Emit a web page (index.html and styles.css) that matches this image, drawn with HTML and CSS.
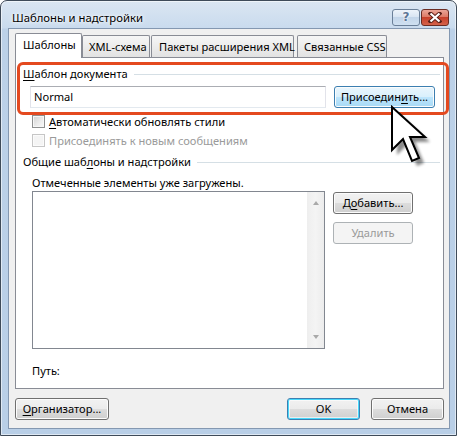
FILE: index.html
```html
<!DOCTYPE html>
<html lang="ru">
<head>
<meta charset="utf-8">
<title>Шаблоны и надстройки</title>
<link rel="stylesheet" href="styles.css">
</head>
<body>
<div class="window">
  <div class="titlebar">
    <span class="title">Шаблоны и надстройки</span>
    <div class="caption-btns">
      <span class="cbtn help">?</span>
      <span class="cbtn close"><svg width="14" height="11" viewBox="0 0 14 11"><path d="M2.5 1.5 L11.5 9.5 M11.5 1.5 L2.5 9.5" stroke="#5a2018" stroke-width="4" stroke-linecap="square"/><path d="M2.5 1.5 L11.5 9.5 M11.5 1.5 L2.5 9.5" stroke="#ffffff" stroke-width="2.2"/></svg></span>
    </div>
  </div>
  <div class="client">
    <div class="tabs">
      <div class="tab tab-1 active">Шаблоны</div>
      <div class="tab tab-2">XML-схема</div>
      <div class="tab tab-3">Пакеты расширения XML</div>
      <div class="tab tab-4">Связанные CSS</div>
    </div>
    <div class="panel">
      <div class="group-head"><span><u>Ш</u>аблон документа</span><i class="gline"></i></div>
      <div class="row-input">
        <div class="textbox">Normal</div>
        <div class="btn hover attach">Присоедин<u>и</u>ть...</div>
      </div>
      <div class="check"><span class="box"></span><span><u>А</u>втоматически обновлять стили</span></div>
      <div class="check check-2 disabled"><span class="box"></span><span>Присоединять к новым сообщениям</span></div>
      <div class="group-head group-2"><span>Общие шаб<u>л</u>оны и надстройки</span><i class="gline"></i></div>
      <div class="note">Отмеченные элементы уже загружены.</div>
      <div class="list-row">
        <div class="listbox">
          <div class="list-area"></div>
          <div class="scrollbar"><span class="arrow up"></span><span class="arrow down"></span></div>
        </div>
        <div class="side-btns">
          <div class="btn side">Д<u>о</u>бавить...</div>
          <div class="btn side disabled">Удалить</div>
        </div>
      </div>
      <div class="path">Путь:</div>
    </div>
    <div class="footer">
      <div class="btn org"><u>О</u>рганизатор...</div>
      <div class="spacer"></div>
      <div class="btn default foot">OK</div>
      <div class="btn foot">Отмена</div>
    </div>
  </div>
  <div class="highlight"></div>
  <svg class="cursor" width="44" height="64" viewBox="0 0 44 64">
    <defs><filter id="sh" x="-20%" y="-20%" width="140%" height="140%"><feGaussianBlur stdDeviation="1.6"/></filter></defs>
    <polygon points="8,7 8,50 19,39 28,61 35,58 26,37 41,37" fill="#000" opacity="0.45" filter="url(#sh)"/>
    <polygon points="3,2 3,45 14,34 23,56 30,53 21,32 36,32" fill="#ffffff" stroke="#000" stroke-width="2" stroke-linejoin="miter"/>
  </svg>
</div>
</body>
</html>
```
FILE: styles.css
```css
html, body {
  margin: 0;
  padding: 0;
  background: #ffffff;
}
body {
  font-family: "Noto Sans", "Open Sans", sans-serif;
  font-size: 11.1px;
  color: #000;
}
u { text-decoration: underline; text-underline-offset: 2px; }

.window {
  position: relative;
  box-sizing: border-box;
  width: 457px;
  height: 436px;
  border: 1px solid #3f4b59;
  border-radius: 7px 7px 0 0;
  background: linear-gradient(180deg, #dbe6f2 0px, #c9dbee 27px, #bcd1e8 28px, #b9cfe7 100%);
  box-shadow: inset 0 0 0 1px rgba(255,255,255,0.55);
  display: flex;
  flex-direction: column;
  overflow: hidden;
}

.titlebar {
  height: 27px;
  display: flex;
  align-items: flex-start;
  justify-content: space-between;
  padding-left: 11px;
}
.title {
  padding-top: 9px;
  line-height: 16px;
  font-size: 11.3px;
  color: #000;
  text-shadow: 0 0 6px #fff, 0 0 3px #fff;
}
.caption-btns {
  display: flex;
  gap: 1px;
  margin-top: 8px;
  margin-right: 7px;
}
.cbtn {
  box-sizing: border-box;
  width: 28px;
  height: 17px;
  border: 1px solid #6a7f98;
  border-radius: 3px;
  display: flex;
  align-items: center;
  justify-content: center;
}
.help {
  background: linear-gradient(180deg, #edf3fa 0%, #d9e5f2 45%, #c3d5e9 50%, #cfe0f1 100%);
  color: #5c7696;
  font-family: "DejaVu Sans", sans-serif;
  font-weight: bold;
  font-size: 12px;
  line-height: 15px;
  text-shadow: 0 0 2px #fff, 0 0 2px #fff;
}
.close {
  border-color: #6b2c22;
  background: linear-gradient(180deg, #eaa597 0%, #dd7a66 45%, #c7402a 50%, #d4624a 100%);
}

.client {
  flex: 1;
  margin: 0 6px 6px 7px;
  box-sizing: border-box;
  border: 1px solid #8498b1;
  background: #f0f0f0;
  padding: 4px 5px 8px 6px;
  display: flex;
  flex-direction: column;
}

.tabs {
  display: flex;
  align-items: flex-end;
  height: 24px;
  position: relative;
  z-index: 1;
}
.tab {
  box-sizing: border-box;
  height: 22px;
  border: 1px solid #898c95;
  border-bottom: none;
  border-radius: 2px 2px 0 0;
  background: linear-gradient(180deg, #f6f6f6 0%, #ececec 50%, #e2e2e2 100%);
  line-height: 21px;
  padding-left: 6px;
  white-space: nowrap;
}
.tab.active {
  height: 25px;
  margin-bottom: -1px;
  background: #ffffff;
  line-height: 22px;
  padding-left: 7px;
}
.tab-1 { width: 67px; }
.tab-2 { width: 68px; }
.tab-3 { width: 143px; margin-left: 1px; padding-left: 7px; }
.tab-4 { width: 90px; margin-left: 3px; }

.panel {
  box-sizing: border-box;
  width: 429px;
  height: 332px;
  border: 1px solid #898c95;
  background: #ffffff;
  padding: 8px 3px 0 7px;
  display: flex;
  flex-direction: column;
}

.group-head {
  display: flex;
  align-items: center;
  height: 16px;
  line-height: 16px;
}
.gline {
  flex: 1;
  height: 1px;
  background: #d5dfe5;
  margin-left: 6px;
  margin-top: 1px;
}
.group-2 { margin-top: 6px; }

.row-input {
  display: flex;
  margin-top: 4px;
  margin-left: 7px;
  gap: 8px;
}
.textbox {
  box-sizing: border-box;
  width: 296px;
  height: 22px;
  border: 1px solid #e2e3ea;
  border-top-color: #abadb3;
  border-bottom-color: #e3e9ef;
  background: #fff;
  padding-left: 3px;
  line-height: 20px;
}

.btn {
  box-sizing: border-box;
  height: 22px;
  border: 1px solid #707070;
  border-radius: 3px;
  background: linear-gradient(180deg, #f2f2f2 0%, #ebebeb 49%, #dddddd 50%, #cfcfcf 100%);
  box-shadow: inset 0 0 0 1px #fcfcfc;
  display: flex;
  align-items: center;
  justify-content: center;
  line-height: 18px;
  white-space: nowrap;
}
.btn.hover {
  border-color: #3c7fb1;
  background: linear-gradient(180deg, #eaf6fd 0%, #d9f0fc 49%, #bee6fd 50%, #a7d9f5 100%);
}
.btn.default {
  border-color: #3c7fb1;
  box-shadow: inset 0 0 0 1px #48d8fb, inset 0 0 0 2px rgba(255,255,255,0.6);
}
.btn.disabled {
  border-color: #adb2b5;
  background: #f4f4f4;
  box-shadow: none;
  color: #9a9a9a;
}
.attach { width: 101px; }

.check {
  display: flex;
  align-items: center;
  height: 15px;
  line-height: 15px;
  margin-top: 6px;
  margin-left: 9px;
  gap: 4px;
}
.check-2 { margin-top: 4px; }
.box {
  box-sizing: border-box;
  width: 13px;
  height: 13px;
  border: 1px solid #8e8f8f;
  background: linear-gradient(135deg, #d2d2d2 0%, #ececec 60%, #fafafa 100%);
  box-shadow: inset 0 0 0 1px #f6f6f6;
}
.check.disabled { color: #9a9a9a; }
.check.disabled .box {
  border-color: #c6c6c6;
  background: #f4f4f4;
  box-shadow: inset 0 0 0 1px #fbfbfb;
}

.note {
  height: 16px;
  line-height: 16px;
  margin-top: 5px;
  margin-left: 9px;
}
.list-row {
  display: flex;
  margin-left: 9px;
  gap: 8px;
  align-items: flex-start;
}
.listbox {
  box-sizing: border-box;
  width: 293px;
  height: 158px;
  border: 1px solid #828790;
  background: #fff;
  display: flex;
}
.list-area { flex: 1; }
.scrollbar {
  width: 17px;
  background: linear-gradient(90deg, #eeeeee 0%, #f4f4f4 50%, #ececec 100%);
  display: flex;
  flex-direction: column;
  justify-content: space-between;
  align-items: center;
  padding: 9px 0;
}
.arrow {
  width: 0;
  height: 0;
  border-left: 3.5px solid transparent;
  border-right: 3.5px solid transparent;
}
.arrow.up { border-bottom: 4px solid #a9a9a9; }
.arrow.down { border-top: 4px solid #a9a9a9; }
.side-btns {
  display: flex;
  flex-direction: column;
  gap: 8px;
  margin-top: 1px;
}
.btn.side { width: 80px; }

.path {
  height: 16px;
  line-height: 16px;
  margin-top: 14px;
  margin-left: 9px;
}

.footer {
  display: flex;
  margin-top: 9px;
  gap: 11px;
}
.spacer { flex: 1; }
.btn.org { width: 94px; }
.btn.foot { width: 73px; }

.highlight {
  position: absolute;
  left: 16px;
  top: 61px;
  width: 432px;
  height: 53px;
  box-sizing: border-box;
  border: 3px solid #e4491f;
  border-radius: 6px;
}
.cursor {
  position: absolute;
  left: 388px;
  top: 104px;
}
```
